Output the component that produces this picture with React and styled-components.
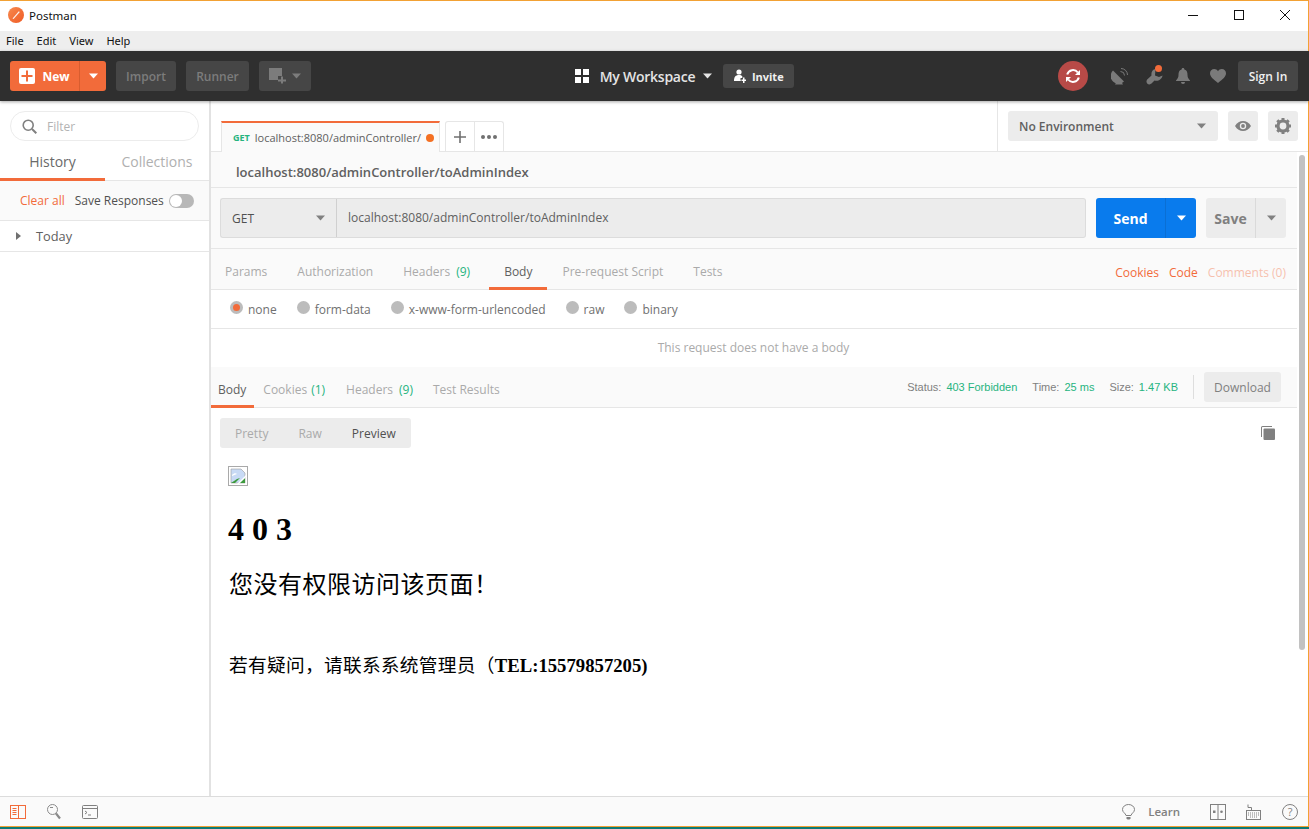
import React from 'react';
import styled, { createGlobalStyle } from 'styled-components';

const GlobalStyle = createGlobalStyle`
  html, body { margin: 0; padding: 0; background: #fff; }
  * { box-sizing: border-box; }
`;

const ORANGE = '#f26b3a';
const GREEN = '#26b47f';

const Caret = ({ color = '#fff', size = 9 }) => (
  <svg width={size} height={Math.ceil(size * 0.56)} viewBox="0 0 9 5" fill={color}><path d="M0 0h9L4.5 5z" /></svg>
);

const Logo = () => (
  <svg width="16" height="16" viewBox="0 0 16 16">
    <defs>
      <linearGradient id="logo" x1="0" y1="0" x2="1" y2="1">
        <stop offset="0" stopColor="#f78a4f" />
        <stop offset="1" stopColor="#ef5b25" />
      </linearGradient>
    </defs>
    <circle cx="8" cy="8" r="8" fill="url(#logo)" />
    <path d="M4.5 11.5 10.8 4.2l1 .9-6.2 7z" fill="#fff" opacity=".9" />
  </svg>
);

const PlusBox = () => (
  <svg width="16" height="16" viewBox="0 0 16 16">
    <rect width="16" height="16" rx="2" fill="#fff" />
    <path d="M7 2.5h2V7h4.5v2H9v4.5H7V9H2.5V7H7z" fill={ORANGE} />
  </svg>
);

const NewWindowIcon = () => (
  <svg width="18" height="16" viewBox="0 0 18 16" fill="#7c7c7c">
    <path d="M0 0h13v8H9v4H0z" />
    <path d="M12 9h2v3h3v2h-3v2h-2v-2H9v-2h3z" transform="translate(0 -.5)" />
  </svg>
);

const GridIcon = () => (
  <svg width="14" height="14" viewBox="0 0 14 14" fill="#fff">
    <rect width="6" height="6" /><rect x="8" width="6" height="6" />
    <rect y="8" width="6" height="6" /><rect x="8" y="8" width="6" height="6" />
  </svg>
);

const InviteIcon = () => (
  <svg width="12" height="14" viewBox="0 0 12 14" fill="#fff">
    <circle cx="5" cy="3" r="2.6" />
    <path d="M0 12c0-4 1.5-6 5-6 1.5 0 2.6.4 3.3 1.2V9H6.5v2.5H7V12z" />
    <path d="M9 8.5h1.5v2H12V12h-1.5v2H9v-2H7.5v-1.5H9z" />
  </svg>
);

const SyncIcon = () => (
  <svg width="16" height="16" viewBox="0 0 16 16" fill="none" stroke="#fff" strokeWidth="2">
    <path d="M2.2 6.5A6 6 0 0 1 12.8 4.5" />
    <path d="M13.8 9.5A6 6 0 0 1 3.2 11.5" />
    <path d="M15 2v5h-5z" fill="#fff" stroke="none" />
    <path d="M1 14V9h5z" fill="#fff" stroke="none" />
  </svg>
);

const SatelliteIcon = () => (
  <svg width="17" height="17" viewBox="0 0 17 17" fill="#7a7a7a">
    <path d="M2 2.5 13 13.5A7.5 7.5 0 0 1 2 2.5z" />
    <path d="M6 13.5 4 16.5h8L10 13z" />
    <path d="M9.5 3.5A4 4 0 0 1 13.500 7.5" fill="none" stroke="#7a7a7a" />
    <path d="M10 .5A6.500 6.500 0 0 1 16.500 7" fill="none" stroke="#7a7a7a" />
  </svg>
);

const WrenchIcon = () => (
  <svg width="17" height="17" viewBox="0 0 17 17" fill="#7a7a7a">
    <path d="M9.5 1C6.5 1.5 5 4 5.5 7.5L1.2 11.5C-.3 13 .5 16.5 3.5 16.5L5.5 15.5 8.5 12.5C12 13.5 16 11.5 16.5 7.5L13 9 9 7.5z" />
  </svg>
);

const BellIcon = () => (
  <svg width="14" height="16" viewBox="0 0 14 16" fill="#7a7a7a">
    <path d="M7 0c1 0 1.4.7 1.4 1.5C11 2.3 11.5 4.5 11.5 7c0 2.5 1 3.8 2.5 5.5V13H0v-.5C1.5 10.8 2.5 9.5 2.5 7c0-2.5.5-4.700 3.100-5.500C5.600.7 6 0 7 0z" />
    <path d="M5 14h4a2 2 0 0 1-4 0z" />
  </svg>
);

const HeartIcon = () => (
  <svg width="16" height="14" viewBox="0 0 16 14" fill="#7a7a7a">
    <path d="M8 14C3 10 0 7.5 0 4.200 0 1.700 1.900 0 4.200 0 5.800 0 7.200.8 8 2.200 8.800.8 10.200 0 11.800 0 14.100 0 16 1.700 16 4.200 16 7.5 13 10 8 14z" />
  </svg>
);

const SearchIcon = () => (
  <svg width="15" height="15" viewBox="0 0 15 15" fill="none" stroke="#808080" strokeWidth="1.6">
    <circle cx="6.2" cy="6.2" r="5" /><path d="M10 10l4.3 4.3" strokeWidth="2" />
  </svg>
);

const EyeIcon = () => (
  <svg width="16" height="10" viewBox="0 0 16 10">
    <path d="M0 5c2-3.3 4.8-5 8-5s6 1.7 8 5c-2 3.300-4.800 5-8 5S2 8.300 0 5z" fill="#808080" />
    <circle cx="8" cy="5" r="3.2" fill="#ececec" />
    <circle cx="8" cy="5" r="1.9" fill="#808080" />
  </svg>
);

const GearIcon = () => (
  <svg width="16" height="16" viewBox="0 0 16 16">
    <circle cx="8" cy="8" r="5" fill="none" stroke="#808080" strokeWidth="3.2" />
    <g stroke="#808080" strokeWidth="3">
      <path d="M8 0v3M8 13v3M0 8h3M13 8h3M2.3 2.3l2.1 2.1M11.6 11.6l2.1 2.1M13.7 2.3l-2.1 2.1M4.4 11.6l-2.1 2.1" />
    </g>
  </svg>
);

const BrokenImage = () => (
  <svg width="20" height="20" viewBox="0 0 20 20">
    <rect x=".5" y=".5" width="19" height="19" fill="#fff" stroke="#a9a9a9" />
    <path d="M3 3h10l4 4v10H3z" fill="#c8daf5" stroke="#9a9a9a" strokeWidth=".6" />
    <path d="M3 17l6-4 3-1-5 5z" fill="#3c9a3c" />
    <path d="M11 17l6-5v5z" fill="#3c9a3c" />
    <path d="M4 9c2-2 4-2 5-1l-5 2z" fill="#fff" />
    <path d="M18 9 9 18l1 1 9-9z" fill="#fff" />
  </svg>
);

const CopyIcon = () => (
  <svg width="14" height="14" viewBox="0 0 14 14" fill="#808080">
    <path d="M0 1.5A1.5 1.5 0 0 1 1.5 0H11v1H1.5a.5.5 0 0 0-.5.5V11H0z" />
    <rect x="2.5" y="2.5" width="11.5" height="11.5" rx="1" />
  </svg>
);

const SidebarIcon = () => (
  <svg width="16" height="14" viewBox="0 0 16 14" fill="none" stroke={ORANGE}>
    <rect x=".5" y=".5" width="15" height="13" />
    <path d="M8.5 0v14M2.5 3.500h4M2.5 5.500h4M2.5 7.500h4M2.5 9.500h4" />
  </svg>
);

const FindIcon = () => (
  <svg width="14" height="16" viewBox="0 0 14 16" fill="none" stroke="#8a8a8a">
    <circle cx="5.5" cy="5.5" r="5" />
    <path d="M9 9.5l4 5" strokeWidth="2.2" />
    <path d="M3 3.5h3" />
  </svg>
);

const ConsoleIcon = () => (
  <svg width="16" height="14" viewBox="0 0 16 14" fill="none" stroke="#808080">
    <rect x=".5" y=".5" width="15" height="13" rx="1" />
    <path d="M0 3.5h16M3 6l2 1.5L3 9M6 10h3" />
  </svg>
);

const BulbIcon = () => (
  <svg width="13" height="16" viewBox="0 0 13 16" fill="none" stroke="#808080">
    <path d="M4 11.5C3.5 9 .5 8.5.5 5.5a6 5 0 0 1 12 0c0 3-3 3.5-3.5 6z" />
    <path d="M4.5 13h4v1.5l-1 1h-2l-1-1z" fill="#808080" stroke="none" />
  </svg>
);

const PanesIcon = () => (
  <svg width="16" height="16" viewBox="0 0 16 16" fill="none" stroke="#808080">
    <rect x=".5" y=".5" width="15" height="15" />
    <path d="M8 0v16" />
    <rect x="3" y="6.5" width="2.5" height="2.5" fill="#808080" stroke="none" />
    <circle cx="11.5" cy="7.8" r="1.3" fill="#808080" stroke="none" />
  </svg>
);

const KeyboardIcon = () => (
  <svg width="15" height="16" viewBox="0 0 15 16" fill="none" stroke="#808080">
    <rect x=".5" y="6.5" width="14" height="9" />
    <path d="M2 .5v3h3.5v3" />
    <path d="M2 9h11M2 11h11M4 13h7" strokeDasharray="1 1" />
  </svg>
);

const HelpIcon = () => (
  <svg width="16" height="16" viewBox="0 0 16 16" fill="none" stroke="#808080">
    <circle cx="8" cy="8" r="7.5" />
    <text x="8" y="12" textAnchor="middle" fontSize="11" fontFamily="Open Sans, sans-serif" fill="#808080" stroke="none">?</text>
  </svg>
);

const Win = styled.div`
  width: 1309px;
  height: 829px;
  overflow: hidden;
  display: flex;
  flex-direction: column;
  border-top: 1px solid #f2a134;
  font-family: 'Open Sans', sans-serif;
  font-size: 12px;
  color: #505050;
  position: relative;
`;

const RightEdge = styled.div`
  position: absolute;
  top: 0;
  right: 0;
  bottom: 2px;
  width: 1px;
  background: #f2a134;
`;

const TitleBar = styled.div`
  height: 30px;
  flex: none;
  display: flex;
  align-items: center;
  padding: 0 0 2px 8px;
  background: #fff;
  color: #111;
`;

const AppName = styled.span`
  margin-left: 5px;
  font-family: 'Noto Sans', sans-serif;
  font-size: 11.5px;
  flex: 1;
`;

const WinButton = styled.div`
  width: 46px;
  height: 28px;
  display: flex;
  align-items: center;
  justify-content: center;
`;

const WinControls = styled.div`
  display: flex;
  margin-right: 1px;
`;

const MenuBar = styled.div`
  height: 20px;
  flex: none;
  background: #eee;
  display: flex;
  align-items: center;
  padding: 0 0 2px 6px;
  gap: 13px;
  font-family: 'Noto Sans', sans-serif;
  font-size: 11px;
  color: #111;
`;

const Toolbar = styled.div`
  height: 50px;
  flex: none;
  background: #2f2f2f;
  display: flex;
  align-items: center;
  justify-content: space-between;
  padding: 0 11px 0 10px;
  box-shadow: 0 1px 3px rgba(0, 0, 0, 0.35);
  position: relative;
  z-index: 2;
`;

const Cluster = styled.div`
  display: flex;
  align-items: center;
`;

const NewMain = styled.div`
  width: 70px;
  height: 30px;
  background: ${ORANGE};
  border-radius: 3px 0 0 3px;
  border-right: 1px solid #d85d2f;
  display: flex;
  align-items: center;
  justify-content: center;
  gap: 7px;
  color: #fff;
  font-weight: 700;
  font-size: 12px;
`;

const NewCaret = styled.div`
  width: 26px;
  height: 30px;
  background: ${ORANGE};
  border-radius: 0 3px 3px 0;
  display: flex;
  align-items: center;
  justify-content: center;
  margin-right: 10px;
`;

const DarkButton = styled.div`
  width: ${(p) => p.$w}px;
  height: 30px;
  background: #464646;
  border-radius: 3px;
  margin-right: ${(p) => p.$mr || 0}px;
  display: flex;
  align-items: center;
  justify-content: center;
  gap: 5px;
  color: #7c7c7c;
  font-weight: 600;
  font-size: 12px;
`;

const WorkspaceName = styled.span`
  margin: 0 8px 0 11px;
  color: #e4e4e4;
  font-size: 14px;
  font-weight: 600;
  letter-spacing: -0.25px;
`;

const InviteButton = styled.div`
  width: 71px;
  height: 24px;
  margin-left: 11px;
  background: #464646;
  border-radius: 3px;
  display: flex;
  align-items: center;
  justify-content: center;
  gap: 6px;
  color: #f0f0f0;
  font-weight: 700;
  font-size: 11px;
`;

const SyncBadge = styled.div`
  width: 30px;
  height: 30px;
  border-radius: 50%;
  background: #b84a47;
  display: flex;
  align-items: center;
  justify-content: center;
  margin-right: 23px;
`;

const ToolIcon = styled.div`
  position: relative;
  width: ${(p) => p.$w}px;
  display: flex;
  justify-content: center;
  margin-right: ${(p) => p.$mr}px;
`;

const Dot = styled.span`
  position: absolute;
  top: ${(p) => p.$top}px;
  right: ${(p) => p.$right}px;
  width: 7px;
  height: 7px;
  border-radius: 50%;
  background: ${ORANGE};
`;

const SignIn = styled.div`
  width: 60px;
  height: 30px;
  background: #464646;
  border-radius: 3px;
  display: flex;
  align-items: center;
  justify-content: center;
  color: #f0f0f0;
  font-size: 12px;
  font-weight: 600;
`;

const Body = styled.div`
  flex: 1;
  min-height: 0;
  display: flex;
`;

const Sidebar = styled.aside`
  width: 210px;
  flex: none;
  background: #fff;
  border-right: 1px solid #e2e2e2;
  box-shadow: 1px 0 0 #e2e2e2;
  position: relative;
  z-index: 1;
  display: flex;
  flex-direction: column;
`;

const FilterBox = styled.div`
  height: 30px;
  margin: 10px 10px 0;
  width: 189px;
  border: 1px solid #ececec;
  border-radius: 15px;
  display: flex;
  align-items: center;
  padding-left: 11px;
  gap: 10px;
  color: #b3b3b3;
  font-size: 12px;
`;

const SideTabs = styled.div`
  height: 40px;
  flex: none;
  display: flex;
  border-bottom: 1px solid #e6e6e6;
`;

const SideTab = styled.div`
  flex: 0 0 ${(p) => p.$w}px;
  display: flex;
  align-items: center;
  justify-content: center;
  padding-top: 3px;
  font-size: 14px;
  color: ${(p) => (p.$active ? '#6a6a6a' : '#b0b0b0')};
  border-bottom: 3px solid ${(p) => (p.$active ? ORANGE : 'transparent')};
  margin-bottom: -1px;
`;

const HistoryTools = styled.div`
  height: 40px;
  flex: none;
  display: flex;
  align-items: center;
  padding-left: 20px;
  border-bottom: 1px solid #e6e6e6;
  background: #fafafa;
`;

const ClearAll = styled.span`
  color: ${ORANGE};
  margin-right: 10px;
`;

const ToggleTrack = styled.span`
  width: 25px;
  height: 14px;
  margin-left: 5px;
  border-radius: 7px;
  background: #b8b8b8;
  display: flex;
  align-items: center;
  padding-left: 1px;
`;

const ToggleKnob = styled.span`
  width: 12px;
  height: 12px;
  border-radius: 50%;
  background: #fff;
`;

const TodayRow = styled.div`
  height: 31px;
  flex: none;
  display: flex;
  align-items: center;
  padding-left: 16px;
  gap: 15px;
  border-bottom: 1px solid #e6e6e6;
  font-size: 12.8px;
  color: #606060;
`;

const RightTriangle = styled.span`
  width: 0;
  height: 0;
  border-left: 5px solid #707070;
  border-top: 4px solid transparent;
  border-bottom: 4px solid transparent;
`;

const Main = styled.main`
  flex: 1;
  min-width: 0;
  display: flex;
  flex-direction: column;
`;

const TabBar = styled.div`
  height: 51px;
  flex: none;
  display: flex;
  border-bottom: 1px solid #e6e6e6;
  padding-left: 11px;
`;

const RequestTab = styled.div`
  width: 219px;
  height: 31px;
  margin-top: 20px;
  background: #fafafa;
  border-top: 2px solid ${ORANGE};
  border-left: 1px solid #e6e6e6;
  border-right: 1px solid #e6e6e6;
  display: flex;
  align-items: center;
  padding-left: 11px;
  font-size: 11px;
  color: #606060;
`;

const Method = styled.span`
  color: ${GREEN};
  font-weight: 700;
  font-size: 9px;
  margin-right: 5px;
`;

const UnsavedDot = styled.span`
  width: 8px;
  height: 8px;
  border-radius: 50%;
  background: #f47023;
  margin-left: 5px;
`;

const TabActions = styled.div`
  margin: 20px 0 0 5px;
  height: 31px;
  width: 59px;
  display: flex;
  border: 1px solid #e6e6e6;
  border-bottom: none;
  border-radius: 3px 3px 0 0;
`;

const TabAction = styled.div`
  flex: 1;
  display: flex;
  align-items: center;
  justify-content: center;
  gap: 2px;
  & + & { border-left: 1px solid #e6e6e6; }
`;

const EllipsisDot = styled.span`
  width: 4px;
  height: 4px;
  border-radius: 50%;
  background: #707070;
`;

const EnvArea = styled.div`
  margin-left: auto;
  width: 312px;
  display: flex;
  align-items: center;
  gap: 10px;
  padding-left: 10px;
  border-left: 1px solid #e6e6e6;
`;

const EnvSelect = styled.div`
  width: 210px;
  height: 30px;
  background: #ececec;
  border-radius: 3px;
  display: flex;
  align-items: center;
  justify-content: space-between;
  padding: 0 12px 0 11px;
  color: #606060;
  font-size: 12px;
  font-weight: 600;
`;

const SquareButton = styled.div`
  width: 30px;
  height: 30px;
  background: #ececec;
  border-radius: 3px;
  display: flex;
  align-items: center;
  justify-content: center;
`;

const Workspace = styled.div`
  flex: 1;
  min-height: 0;
  display: flex;
`;

const Pane = styled.div`
  flex: 1;
  min-width: 0;
  display: flex;
  flex-direction: column;
`;

const ScrollTrack = styled.div`
  width: 12px;
  flex: none;
  padding: 3px 4px 0 2px;
`;

const ScrollThumb = styled.div`
  height: 495px;
  background: #c2c2c2;
  border-radius: 3px;
`;

const NameRow = styled.div`
  height: 36px;
  flex: none;
  display: flex;
  align-items: center;
  padding: 5px 0 0 26px;
  background: #fafafa;
  border-bottom: 1px solid #e6e6e6;
  font-size: 13px;
  font-weight: 600;
  color: #606060;
`;

const UrlRow = styled.div`
  height: 61px;
  flex: none;
  display: flex;
  align-items: center;
  padding-left: 10px;
  background: #fafafa;
  border-bottom: 1px solid #e6e6e6;
`;

const MethodSelect = styled.div`
  width: 117px;
  height: 40px;
  background: #ececec;
  border: 1px solid #dcdcdc;
  border-right: 1px solid #d0d0d0;
  border-radius: 3px 0 0 3px;
  display: flex;
  align-items: center;
  justify-content: space-between;
  padding: 0 11px 0 11px;
  color: #505050;
`;

const UrlInput = styled.div`
  width: 749px;
  height: 40px;
  background: #ececec;
  border: 1px solid #dcdcdc;
  border-left: none;
  border-radius: 0 3px 3px 0;
  display: flex;
  align-items: center;
  padding: 0 0 1px 11px;
  margin-right: 10px;
  font-size: 12px;
  color: #606060;
`;

const SplitButton = styled.div`
  height: 40px;
  width: ${(p) => p.$main}px;
  flex: none;
  background: ${(p) => (p.$primary ? '#097bed' : '#ececec')};
  color: ${(p) => (p.$primary ? '#fff' : '#808080')};
  border-radius: 3px 0 0 3px;
  display: flex;
  align-items: center;
  justify-content: center;
  font-size: 14px;
  font-weight: 700;
  border-right: 1px solid ${(p) => (p.$primary ? '#0a6fd4' : '#dadada')};
`;

const SplitCaret = styled.div`
  height: 40px;
  width: ${(p) => p.$w}px;
  flex: none;
  margin-right: ${(p) => p.$mr || 0}px;
  background: ${(p) => (p.$primary ? '#097bed' : '#ececec')};
  border-radius: 0 3px 3px 0;
  display: flex;
  align-items: center;
  justify-content: center;
`;

const Tabs = styled.div`
  height: 41px;
  flex: none;
  display: flex;
  align-items: stretch;
  background: #fafafa;
  border-bottom: 1px solid #e6e6e6;
  padding-right: ${(p) => p.$pr || 0}px;
  font-size: 12px;
`;

const Tab = styled.div`
  padding: 7px ${(p) => p.$pad || 15}px 0;
  margin-right: ${(p) => p.$gap || 0}px;
  margin-bottom: -1px;
  display: flex;
  align-items: center;
  gap: 4px;
  white-space: nowrap;
  color: ${(p) => (p.$active ? '#606060' : '#aaa')};
  border-bottom: 3px solid ${(p) => (p.$active ? ORANGE : 'transparent')};
`;

const Count = styled.span`
  color: ${GREEN};
  margin-left: ${(p) => (p.$wide ? 2 : 0)}px;
`;

const TabLinks = styled.div`
  margin-left: auto;
  display: flex;
  align-items: center;
  gap: 10px;
  padding-top: 7px;
`;

const TabLink = styled.span`
  color: ${ORANGE};
  opacity: ${(p) => (p.$muted ? 0.4 : 1)};
`;

const BodyTypes = styled.div`
  height: 39px;
  flex: none;
  display: flex;
  align-items: center;
  padding-left: 20px;
  gap: 20px;
  border-bottom: 1px solid #e6e6e6;
  font-size: 12px;
  color: #707070;
`;

const BodyType = styled.label`
  display: flex;
  align-items: center;
  gap: 5px;
`;

const Radio = styled.span`
  width: 13px;
  height: 13px;
  margin-top: -4px;
  border-radius: 50%;
  background: ${(p) => (p.$on ? ORANGE : '#bcbcbc')};
  ${(p) => p.$on && 'border: 3px solid #bcbcbc;'}
`;

const EmptyNote = styled.div`
  height: 38px;
  flex: none;
  display: flex;
  align-items: center;
  justify-content: center;
  padding-bottom: 2px;
  color: #aaa;
  font-size: 12px;
`;

const Stats = styled.div`
  margin-left: auto;
  display: flex;
  align-items: center;
  font-family: 'Liberation Sans', sans-serif;
  font-size: 11px;
  color: #808080;
`;

const Stat = styled.span`
  margin-left: ${(p) => p.$ml}px;
`;

const StatValue = styled.span`
  color: ${GREEN};
  margin-left: 5px;
`;

const StatDivider = styled.span`
  width: 1px;
  height: 24px;
  background: #dedede;
  margin: 0 10px 0 15px;
`;

const DownloadButton = styled.div`
  width: 77px;
  height: 30px;
  background: #ececec;
  border-radius: 3px;
  display: flex;
  align-items: center;
  justify-content: center;
  color: #808080;
  font-family: 'Open Sans', sans-serif;
  font-size: 12px;
`;

const ResponseBody = styled.div`
  flex: 1;
  min-height: 0;
  padding: 10px 22px 0 10px;
`;

const ViewBar = styled.div`
  display: flex;
  align-items: center;
  justify-content: space-between;
`;

const ViewModes = styled.div`
  width: 191px;
  height: 30px;
  background: #ececec;
  border-radius: 3px;
  display: flex;
  align-items: center;
  padding-left: 15px;
  font-size: 12px;
`;

const ViewMode = styled.span`
  margin-right: ${(p) => p.$mr}px;
  color: ${(p) => (p.$active ? '#505050' : '#aaa')};
`;

const Preview = styled.div`
  padding: 18px 0 0 8px;
  font-family: 'Liberation Serif', 'Noto Sans CJK SC', serif;
  color: #000;
`;

const Picture = styled.div`
  height: 20px;
  margin-bottom: 25px;
`;

const Heading = styled.div`
  font-weight: 700;
  font-size: 32px;
  line-height: 37px;
`;

const SubHeading = styled.div`
  font-size: 24px;
  line-height: 28px;
  font-weight: 400;
  letter-spacing: 0.5px;
  margin-top: 23px;
  padding-left: 1px;
`;

const Contact = styled.div`
  font-size: 18.72px;
  line-height: 22px;
  font-weight: 700;
  margin-top: 56px;
  padding-left: 1px;
`;

const ContactCjk = styled.span`
  font-weight: 400;
  letter-spacing: 0.28px;
`;

const StatusBar = styled.footer`
  height: 30px;
  flex: none;
  display: flex;
  align-items: center;
  background: #fafafa;
  border-top: 1px solid #dcdcdc;
  padding: 0 11px 0 10px;
`;

const FootIcon = styled.div`
  display: flex;
  align-items: center;
  margin-right: ${(p) => p.$mr || 0}px;
  margin-left: ${(p) => (p.$push ? 'auto' : '0')};
`;

const Learn = styled.span`
  margin: 0 30px 0 13px;
  font-weight: 600;
  font-size: 11.5px;
  color: #808080;
`;

const Edge = styled.div`
  height: 3px;
  flex: none;
  border-top: 1px solid #f2a134;
  background: #0b7a75;
`;

const menus = ['File', 'Edit', 'View', 'Help'];

const App = () => {
  return (
    <Win>
      <GlobalStyle />
      <RightEdge />
      <TitleBar>
        <Logo />
        <AppName>Postman</AppName>
        <WinControls>
          <WinButton>
            <svg width="10" height="10" viewBox="0 0 10 10" stroke="#111"><path d="M0 5.5h10" /></svg>
          </WinButton>
          <WinButton>
            <svg width="10" height="10" viewBox="0 0 10 10" fill="none" stroke="#111"><rect x=".5" y=".5" width="9" height="9" /></svg>
          </WinButton>
          <WinButton>
            <svg width="10" height="10" viewBox="0 0 10 10" stroke="#111"><path d="M0 0l10 10M10 0L0 10" /></svg>
          </WinButton>
        </WinControls>
      </TitleBar>
      <MenuBar>
        {menus.map((m) => <span key={m}>{m}</span>)}
      </MenuBar>
      <Toolbar>
        <Cluster>
          <NewMain><PlusBox />New</NewMain>
          <NewCaret><Caret /></NewCaret>
          <DarkButton $w={60} $mr={10}>Import</DarkButton>
          <DarkButton $w={63} $mr={10}>Runner</DarkButton>
          <DarkButton $w={52}><NewWindowIcon /><Caret color="#7c7c7c" /></DarkButton>
        </Cluster>
        <Cluster>
          <GridIcon />
          <WorkspaceName>My Workspace</WorkspaceName>
          <Caret color="#e4e4e4" />
          <InviteButton><InviteIcon />Invite</InviteButton>
        </Cluster>
        <Cluster>
          <SyncBadge><SyncIcon /></SyncBadge>
          <ToolIcon $w={17} $mr={18}><SatelliteIcon /></ToolIcon>
          <ToolIcon $w={17} $mr={13}><WrenchIcon /><Dot $top={-3} $right={1} /></ToolIcon>
          <ToolIcon $w={14} $mr={20}><BellIcon /></ToolIcon>
          <ToolIcon $w={16} $mr={12}><HeartIcon /></ToolIcon>
          <SignIn>Sign In</SignIn>
        </Cluster>
      </Toolbar>
      <Body>
        <Sidebar>
          <FilterBox><SearchIcon />Filter</FilterBox>
          <SideTabs>
            <SideTab $w={105} $active>History</SideTab>
            <SideTab $w={104}>Collections</SideTab>
          </SideTabs>
          <HistoryTools>
            <ClearAll>Clear all</ClearAll>
            Save Responses
            <ToggleTrack><ToggleKnob /></ToggleTrack>
          </HistoryTools>
          <TodayRow><RightTriangle />Today</TodayRow>
        </Sidebar>
        <Main>
          <TabBar>
            <RequestTab>
              <Method>GET</Method>
              localhost:8080/adminController/
              <UnsavedDot />
            </RequestTab>
            <TabActions>
              <TabAction>
                <svg width="12" height="12" viewBox="0 0 12 12" fill="#707070"><path d="M5.2 0h1.6v5.2H12v1.6H6.8V12H5.2V6.8H0V5.2h5.2z" /></svg>
              </TabAction>
              <TabAction><EllipsisDot /><EllipsisDot /><EllipsisDot /></TabAction>
            </TabActions>
            <EnvArea>
              <EnvSelect>No Environment<Caret color="#808080" /></EnvSelect>
              <SquareButton><EyeIcon /></SquareButton>
              <SquareButton><GearIcon /></SquareButton>
            </EnvArea>
          </TabBar>
          <Workspace>
            <Pane>
              <NameRow>localhost:8080/adminController/toAdminIndex</NameRow>
              <UrlRow>
                <MethodSelect>GET<Caret color="#808080" /></MethodSelect>
                <UrlInput>localhost:8080/adminController/toAdminIndex</UrlInput>
                <SplitButton $primary $main={70}>Send</SplitButton>
                <SplitCaret $primary $w={30} $mr={10}><Caret /></SplitCaret>
                <SplitButton $main={50}>Save</SplitButton>
                <SplitCaret $w={30}><Caret color="#808080" /></SplitCaret>
              </UrlRow>
              <Tabs $pr={11}>
                <Tab>Params</Tab>
                <Tab>Authorization</Tab>
                <Tab $gap={4}>Headers <Count $wide>(9)</Count></Tab>
                <Tab $active>Body</Tab>
                <Tab>Pre-request Script</Tab>
                <Tab>Tests</Tab>
                <TabLinks>
                  <TabLink>Cookies</TabLink>
                  <TabLink>Code</TabLink>
                  <TabLink $muted>Comments (0)</TabLink>
                </TabLinks>
              </Tabs>
              <BodyTypes>
                <BodyType><Radio $on />none</BodyType>
                <BodyType><Radio />form-data</BodyType>
                <BodyType><Radio />x-www-form-urlencoded</BodyType>
                <BodyType><Radio />raw</BodyType>
                <BodyType><Radio />binary</BodyType>
              </BodyTypes>
              <EmptyNote>This request does not have a body</EmptyNote>
              <Tabs $pr={16}>
                <Tab $active $pad={8}>Body</Tab>
                <Tab $pad={9}>Cookies <Count>(1)</Count></Tab>
                <Tab $pad={12}>Headers <Count $wide>(9)</Count></Tab>
                <Tab $pad={8}>Test Results</Tab>
                <Stats>
                  <Stat>Status:<StatValue>403 Forbidden</StatValue></Stat>
                  <Stat $ml={15}>Time:<StatValue>25 ms</StatValue></Stat>
                  <Stat $ml={15}>Size:<StatValue>1.47 KB</StatValue></Stat>
                  <StatDivider />
                  <DownloadButton>Download</DownloadButton>
                </Stats>
              </Tabs>
              <ResponseBody>
                <ViewBar>
                  <ViewModes>
                    <ViewMode $mr={30}>Pretty</ViewMode>
                    <ViewMode $mr={30}>Raw</ViewMode>
                    <ViewMode $mr={0} $active>Preview</ViewMode>
                  </ViewModes>
                  <CopyIcon />
                </ViewBar>
                <Preview>
                  <Picture><BrokenImage /></Picture>
                  <Heading>4 0 3</Heading>
                  <SubHeading>您没有权限访问该页面！</SubHeading>
                  <Contact><ContactCjk>若有疑问，请联系系统管理员（</ContactCjk>TEL:15579857205)</Contact>
                </Preview>
              </ResponseBody>
            </Pane>
            <ScrollTrack><ScrollThumb /></ScrollTrack>
          </Workspace>
        </Main>
      </Body>
      <StatusBar>
        <FootIcon $mr={21}><SidebarIcon /></FootIcon>
        <FootIcon $mr={21}><FindIcon /></FootIcon>
        <FootIcon><ConsoleIcon /></FootIcon>
        <FootIcon $push><BulbIcon /></FootIcon>
        <Learn>Learn</Learn>
        <FootIcon $mr={20}><PanesIcon /></FootIcon>
        <FootIcon $mr={21}><KeyboardIcon /></FootIcon>
        <FootIcon><HelpIcon /></FootIcon>
      </StatusBar>
      <Edge />
    </Win>
  );
};

export default App;
